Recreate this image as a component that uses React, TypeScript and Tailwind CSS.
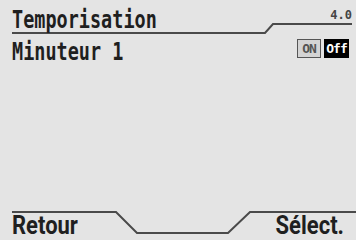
const mono = { fontFamily: '"DejaVu Sans Mono", "Liberation Mono", monospace' };

function TopRule() {
  return (
    <svg
      className="pointer-events-none absolute inset-0"
      width="356"
      height="36"
      viewBox="0 0 356 36"
    >
      <polyline
        points="12,33 265,33 273,24 352,24"
        fill="none"
        stroke="#4a4a4a"
        strokeWidth="2"
      />
    </svg>
  );
}

function BottomRule() {
  return (
    <svg
      className="pointer-events-none absolute inset-0"
      width="356"
      height="35"
      viewBox="0 0 356 35"
    >
      <polyline
        points="12,7 116,7 137,28 228,28 250,7 356,7"
        fill="none"
        stroke="#4a4a4a"
        strokeWidth="2"
      />
    </svg>
  );
}

function Toggle({ on }: { on: boolean }) {
  return (
    <div className="flex h-[19px] items-stretch gap-[3px]" style={mono}>
      <span
        className={`flex w-[24px] items-center justify-center border text-[13px] font-bold leading-none tracking-[-1px] ${
          on
            ? "border-black bg-black text-white"
            : "border-[#555] bg-[#d4d4d4] text-[#555]"
        }`}
      >
        ON
      </span>
      <span
        className={`flex w-[25px] items-center justify-center border text-[13px] font-bold leading-none tracking-[-1px] ${
          on
            ? "border-[#555] bg-[#d4d4d4] text-[#555]"
            : "border-black bg-black text-white"
        }`}
      >
        Off
      </span>
    </div>
  );
}

export default function App() {
  return (
    <div className="flex h-[240px] w-[356px] flex-col overflow-hidden bg-[#e4e4e4] text-[#1f1f1f]">
      <header className="relative flex h-[36px] shrink-0 items-start justify-between pl-[12px] pr-[4px]">
        <TopRule />
        <h1
          className="mt-[14px] inline-block origin-bottom scale-y-[1.3] text-[18.5px] font-bold leading-[18px]"
          style={mono}
        >
          Temporisation
        </h1>
        <span
          className="mt-[9px] text-[12px] font-bold leading-none text-[#444]"
          style={mono}
        >
          4.0
        </span>
      </header>

      <div className="flex items-start justify-between pl-[12px] pr-[7px] pt-[3px]">
        <span
          className="mt-[7px] inline-block origin-bottom scale-y-[1.3] text-[18.5px] font-bold leading-[18px]"
          style={mono}
        >
          Minuteur 1
        </span>
        <Toggle on={false} />
      </div>

      <div className="flex-1" />

      <footer
        className="relative flex h-[35px] shrink-0 items-end justify-between pb-[1px] pl-[12px] pr-[12px]"
        style={{ fontFamily: 'Roboto, "Open Sans", sans-serif' }}
      >
        <BottomRule />
        <span className="inline-block origin-bottom scale-y-[1.15] text-[22px] font-bold leading-[22px]">
          Retour
        </span>
        <span className="inline-block origin-bottom scale-y-[1.15] text-[22px] font-bold leading-[22px]">
          Sélect.
        </span>
      </footer>
    </div>
  );
}
